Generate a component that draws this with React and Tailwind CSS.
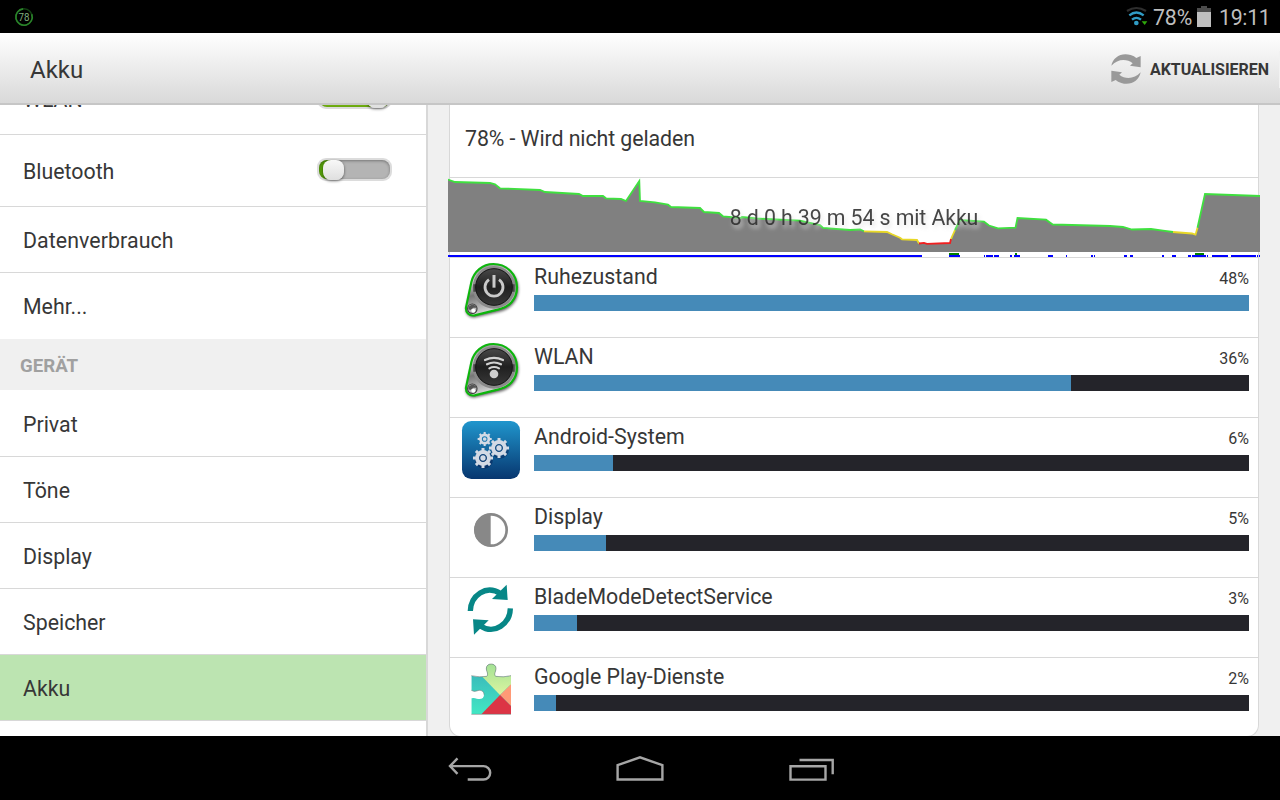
import React from 'react';

// ─────────────────────────────────────────────
//  Data
// ─────────────────────────────────────────────
const deviceItems = ['Privat', 'Töne', 'Display', 'Speicher', 'Akku'];

const consumers = [
  { name: 'Ruhezustand', pct: '48%', fill: 715, icon: 'power' },
  { name: 'WLAN', pct: '36%', fill: 537, icon: 'wifi' },
  { name: 'Android-System', pct: '6%', fill: 79, icon: 'gears' },
  { name: 'Display', pct: '5%', fill: 72, icon: 'contrast' },
  { name: 'BladeModeDetectService', pct: '3%', fill: 43, icon: 'sync' },
  { name: 'Google Play-Dienste', pct: '2%', fill: 22, icon: 'puzzle' },
];

// Battery level over time, split where the colour changes
const levels = [
  {
    color: '#3fe03f',
    points:
      '448,179.5 455,182 490,183 495,184.3 500,188.3 540,190 545,192 579,194 583,196 603,196 606,198.3 621,199 626,201 639.3,181 640,201 655,202.3 668,204.7 671,207 700,208 704,212 719,213 723,216.3 741,218 742,217 757,218.5 800,220.7 820,225 823,228 850,230 860,229.5 864,231.3',
  },
  { color: '#e8d827', points: '864,231.3 887,232 892,234.3 900,237.7 902,239.3 917,240 919,243.5' },
  { color: '#f01f1f', points: '919,243.5 924,242.8 927,243.8 950,243 951,239' },
  { color: '#e8d827', points: '951,239 955,230' },
  {
    color: '#3fe03f',
    points:
      '955,230 960,220 984,221.7 989,225.5 998,228.3 1015.5,227.7 1017.5,218 1046,219.7 1052.7,224.5 1110,226 1123,227 1132,229.5 1151,229 1163,230.7 1173,232',
  },
  { color: '#e8d827', points: '1173,232 1192,233.5 1195.5,234.7 1197.5,227.7' },
  { color: '#3fe03f', points: '1197.5,227.7 1205,194 1260,196' },
];

// [start, end] of every awake period
const awake = [
  [448, 922], [949, 960], [984, 985], [986, 993], [994, 999], [1010, 1012], [1014, 1020],
  [1048, 1053], [1066, 1067], [1091, 1093], [1094, 1095], [1124, 1127], [1130, 1133],
  [1162, 1164], [1172, 1176], [1188, 1191], [1192, 1206], [1207, 1208], [1212, 1228],
  [1231, 1256], [1257, 1258], [1259, 1260],
];
const charging = [[949, 959], [1015, 1017], [1195, 1204]];

// ─────────────────────────────────────────────
//  Icons
// ─────────────────────────────────────────────
const IconBox = ({ children }) => (
  <svg className="w-[84px] h-[79px] shrink-0" viewBox="0 9 252 237" fill="none">{children}</svg>
);

const TagIcon = ({ id, children }) => (
  <IconBox>
    <defs>
      <linearGradient id={`${id}-metal`} x1="0" y1="0" x2="0.3" y2="1">
        <stop offset="0" stopColor="#777" />
        <stop offset="0.35" stopColor="#d0d0d0" />
        <stop offset="0.6" stopColor="#777" />
        <stop offset="1" stopColor="#ddd" />
      </linearGradient>
      <linearGradient id={`${id}-face`} x1="0" y1="0" x2="0" y2="1">
        <stop offset="0" stopColor="#484848" />
        <stop offset="0.5" stopColor="#202020" />
        <stop offset="1" stopColor="#383838" />
      </linearGradient>
      <filter id={`${id}-shadow`} x="-20%" y="-20%" width="140%" height="140%">
        <feGaussianBlur stdDeviation="4" />
      </filter>
    </defs>
    <path
      d="M64 82C71 50 98 27 130 27C170 27 203 58 203 97C203 136 178 158 146 166L74 183C56 186 44 173 46 157Z"
      fill="#000" opacity="0.65" filter={`url(#${id}-shadow)`} transform="translate(2 4)"
    />
    <path
      d="M64 82C71 50 98 27 130 27C170 27 201 58 201 97C201 134 176 157 146 163L74 181C57 184 46 171 48 157Z"
      fill={`url(#${id}-metal)`} stroke="#0cb60c" strokeWidth="6.5"
    />
    <circle cx="132" cy="97" r="64" fill="#8a8a8a" />
    <path d="M70 99H194" stroke="#222" strokeWidth="22" opacity="0.65" />
    <circle cx="132" cy="96" r="55" fill={`url(#${id}-face)`} stroke="#151515" strokeWidth="3" />
    <circle cx="67" cy="161" r="14" fill="#bbb" stroke="#3c3c3c" strokeWidth="3.5" />
    <path d="M55 160C57 146 77 146 80 158L70 158L60 166Z" fill="#555" />
    <circle cx="70" cy="167" r="6" fill="#fff" />
    {children}
  </IconBox>
);

const Gear = ({ x, y, r }) => (
  <g transform={`translate(${x} ${y})`}>
    {[0, 45, 90, 135, 180, 225, 270, 315].map((a) => (
      <rect key={a} x={-r * 0.19} y={-r * 1.28} width={r * 0.38} height={r * 0.5} fill="#d3dae5" transform={`rotate(${a})`} />
    ))}
    <circle r={r * 0.76} stroke="#d3dae5" strokeWidth={r * 0.5} />
    <circle r={r * 0.34} fill="#d3dae5" />
  </g>
);

const icons = {
  power: (
    <TagIcon id="power">
      <path d="M117 74A27 27 0 1 0 147 74" stroke="#cacaca" strokeWidth="8.5" />
      <path d="M132 60V98" stroke="#cacaca" strokeWidth="9" />
    </TagIcon>
  ),
  wifi: (
    <TagIcon id="wifi">
      <path d="M105 75Q132 62 159 75M111 88Q132 77 153 88M118 100Q132 92 147 100" stroke="#d2d2d2" strokeWidth="6.5" strokeLinecap="round" />
      <circle cx="132" cy="117" r="13" fill="#cdcdcd" />
    </TagIcon>
  ),
  gears: (
    <IconBox>
      <defs>
        <linearGradient id="tile" x1="0" y1="0" x2="0" y2="1">
          <stop offset="0" stopColor="#2096cd" />
          <stop offset="1" stopColor="#07366f" />
        </linearGradient>
      </defs>
      <rect x="36" y="18" width="174" height="174" rx="28" fill="url(#tile)" />
      <g opacity="0.3" transform="translate(3 5)">
        <circle cx="147" cy="99" r="27" fill="#003" />
        <circle cx="99" cy="129" r="27" fill="#003" />
      </g>
      <Gear x={104} y={72} r={16.5} />
      <Gear x={147} y={99} r={23.5} />
      <Gear x={99} y={129} r={23.5} />
    </IconBox>
  ),
  contrast: (
    <IconBox>
      <circle cx="123" cy="105" r="47" stroke="#888" strokeWidth="8" />
      <path d="M122 56A49 49 0 0 0 122 154Z" fill="#888" />
    </IconBox>
  ),
  sync: (
    <IconBox>
      {[0, 180].map((a) => (
        <g key={a} transform={`rotate(${a} 121 104)`}>
          <path d="M61 108C62 62 108 27 152 56" stroke="#078787" strokeWidth="16" />
          <path d="M170 29L173 75L126 72Z" fill="#078787" />
        </g>
      ))}
    </IconBox>
  ),
  puzzle: (
    <IconBox>
      <defs>
        <linearGradient id="teal" x1="0" y1="0" x2="0" y2="1">
          <stop offset="0" stopColor="#38adb8" />
          <stop offset="1" stopColor="#42e9c4" />
        </linearGradient>
        <linearGradient id="lime" x1="0" y1="0" x2="0" y2="1">
          <stop offset="0" stopColor="#9fe094" />
          <stop offset="1" stopColor="#dcf5a0" />
        </linearGradient>
        <clipPath id="piece">
          <path d="M64 62Q90 68 110 64C117 58 108 47 109 39C110 23 137 23 138 39C139 47 130 58 137 64Q160 68 183 62V178H64V130Q72 127 80 131C94 135 102 129 102 119C102 108 92 103 80 108Q72 111 64 106Z" />
        </clipPath>
      </defs>
      <g clipPath="url(#piece)">
        <path d="M60 20H190V182H60Z" fill="url(#teal)" />
        <path d="M94 62L150 120L184 87V20H94Z" fill="url(#lime)" />
        <path d="M150 120L184 87V154Z" fill="#ff9a76" />
        <path d="M150 120L184 154V182H90Z" fill="#dc3545" />
      </g>
      <path
        d="M64 62Q90 68 110 64C117 58 108 47 109 39C110 23 137 23 138 39C139 47 130 58 137 64Q160 68 183 62M64 106Q72 111 80 108C92 103 102 108 102 119M64 178H183"
        stroke="#777" strokeWidth="2.5" opacity="0.7"
      />
    </IconBox>
  ),
};

const Toggle = ({ on }) => (
  <div className="flex w-[75px] h-[23px] rounded-[9px] bg-[#dcdcdc] p-[2px]">
    <div
      className={`flex items-center w-full h-[19px] rounded-[8px] pl-[4px] pr-[2px] shadow-[inset_0_1px_3px_rgba(0,0,0,0.35)] ${
        on ? 'justify-end bg-[#71b011]' : 'bg-[linear-gradient(90deg,#5aa50c_12px,#b4b4b4_12px)]'
      }`}
    >
      <div className="w-[21px] h-[20px] mt-px shrink-0 rounded-[8px] bg-linear-to-b from-[#f8f8f8] to-[#dfdfdf] shadow-[0_1px_3px_rgba(0,0,0,0.55)]" />
    </div>
  </div>
);

// ─────────────────────────────────────────────
//  Bars
// ─────────────────────────────────────────────
const StatusBar = () => (
  <div className="h-[33px] shrink-0 bg-black flex items-center justify-between pl-[14px] pr-[10px] text-[#bebebe]">
    <svg className="w-5 h-5" viewBox="0 0 20 20" fill="none">
      <circle cx="10" cy="10" r="8.2" stroke="#123f12" strokeWidth="1.6" />
      <path d="M10 1.8A8.2 8.2 0 1 0 18 8" stroke="#2a842a" strokeWidth="1.6" transform="rotate(-6 10 10)" />
      <text x="10" y="13.7" textAnchor="middle" fontSize="10.5" fill="#7fae7f" fontFamily="Roboto" textLength="11" lengthAdjust="spacingAndGlyphs">78</text>
    </svg>
    <div className="flex items-center leading-none">
      <svg className="w-[22px] h-5 mr-[5px]" viewBox="138 20 66 60" fill="none">
        <path d="M141 35Q169 17 198 35" stroke="#2e2e2e" strokeWidth="6.5" />
        <path d="M148 48Q169 31 191 48M156 61Q169 50 183 61" stroke="#309cc5" strokeWidth="7" />
        <circle cx="169" cy="71" r="7" fill="#309cc5" />
        <path d="M185 66H202L194 77Z" fill="#2fa80c" />
      </svg>
      <span className="w-[39px] mr-[5px] pt-[2px] text-[21.3px] tracking-[-0.1px] whitespace-nowrap">78%</span>
      <svg className="w-[14px] h-[21px] mr-[8px]" viewBox="0 0 14 21">
        <path d="M4 0H10V2H14V7H0V2H4Z" fill="#4c4c4c" />
        <path d="M0 6H14V21H0Z" fill="#bfbfbf" />
      </svg>
      <span className="w-[51px] pt-[2px] text-[21.3px] tracking-[-0.3px] whitespace-nowrap">19:11</span>
    </div>
  </div>
);

const ActionBar = () => (
  <div className="h-[72px] shrink-0 flex items-center justify-between pl-[30px] border-b-2 border-[#c6c6c6] bg-linear-to-b from-white to-[#d9d9d9]">
    <h1 className="text-[24px] leading-none pt-[3px]">Akku</h1>
    <div className="flex items-center pt-[2px]">
      <svg className="w-[30px] h-[30px] mr-[9px]" viewBox="93 162 90 90" fill="#999">
        {[0, 180].map((a) => (
          <path
            key={a}
            transform={`rotate(${a} 138 207)`}
            d="M94 197C99 171 125 156 152 165Q163 168 169 174L182 168V202L150 197L158 190C140 175 112 177 94 197Z"
          />
        ))}
      </svg>
      <span className="w-[120px] text-[16px] leading-none font-bold whitespace-nowrap pt-px tracking-[-0.03px]">AKTUALISIEREN</span>
      <div className="w-px h-[37px] ml-[9px] bg-[#f2f2f2]" />
    </div>
  </div>
);

const NavBar = () => (
  <div className="h-16 shrink-0 bg-black flex justify-center">
    <svg className="w-[170px] h-16" viewBox="0 0 170 64" fill="none" stroke="#a6a6a6" strokeWidth="2.4">
      <path d="M72.5 22.4L65 30.1L72.5 37.8M65 30.1H98.5A6.7 6.7 0 0 1 98.5 43.5H82.7" />
    </svg>
    <svg className="w-[170px] h-16" viewBox="0 0 170 64" fill="none" stroke="#a6a6a6" strokeWidth="2.4">
      <path d="M62.6 29.2L85 21.3L107.4 29.2V43.5H62.6Z" />
    </svg>
    <svg className="w-[170px] h-16" viewBox="0 0 170 64" fill="none" stroke="#a6a6a6" strokeWidth="2.4">
      <path d="M65.5 30.3H100.5V43.6H65.5ZM74.5 24H107.7V38.3" />
    </svg>
  </div>
);

const Sidebar = () => (
  <div className="w-[428px] shrink-0 overflow-hidden bg-white border-r-2 border-[#d8d8d8] text-[21.33px] leading-none">
    <div className="-mt-[42px]">
      {['WLAN', 'Bluetooth'].map((name) => (
        <div key={name} className="h-[72px] flex items-center justify-between pl-[23px] pr-[34px] border-b border-[#d8d8d8]">
          <span className="pt-[3px]">{name}</span>
          <div className="-mt-[3px]">
            <Toggle on={name === 'WLAN'} />
          </div>
        </div>
      ))}
      <div className="h-[66px] flex items-center pl-[23px] pt-[3px] border-b border-[#d8d8d8] tracking-[0.08px]">Datenverbrauch</div>
      <div className="h-[66px] flex items-center pl-[23px] pt-[2px]">Mehr...</div>
      <div className="h-[51px] flex items-center pl-5 pt-[3px] bg-[#f0f0f0] text-[18.67px] font-bold text-[#a0a0a0]">GERÄT</div>
      <div className="pt-px">
        {deviceItems.map((name) => (
          <div
            key={name}
            className={`h-[66px] flex items-center pl-[23px] pt-[3px] border-b border-[#d8d8d8] ${name === 'Akku' ? 'bg-[#bce4b1]' : ''}`}
          >
            {name}
          </div>
        ))}
      </div>
    </div>
  </div>
);

// ─────────────────────────────────────────────
//  Battery history
// ─────────────────────────────────────────────
const outline = levels.map((l) => l.points).join(' ');

const History = () => (
  <div className="relative h-20 -mx-[2px] flex justify-center">
    <svg className="absolute inset-0 w-[812px] h-20" viewBox="448 178 812 80" fill="none">
      <path d="M450 257.5H1258" stroke="#d8d8d8" />
      <polygon points={`448,252 ${outline} 1260,252`} fill="#808080" />
      {levels.map((l, i) => (
        <polyline key={i} points={l.points} stroke={l.color} strokeWidth="1.8" />
      ))}
      {charging.map(([a, b]) => (
        <rect key={a} x={a} y="253" width={b - a} height="2" fill="#008000" />
      ))}
      {awake.map(([a, b]) => (
        <rect key={a} x={a} y="255" width={b - a} height="2" fill="#00f" />
      ))}
    </svg>
    <span className="relative pt-[29px] text-[21.33px] tracking-[-0.1px] leading-none whitespace-nowrap text-[#333] opacity-90 [text-shadow:2px_3px_4px_rgba(225,225,225,0.9)]">
      8 d 0 h 39 m 54 s mit Akku
    </span>
  </div>
);

const ConsumerRow = ({ item }) => (
  <div className="h-20 flex items-start pr-[9px] border-b border-[#d8d8d8] last:border-b-0">
    {icons[item.icon]}
    <div className="flex-1">
      <div className="h-[37px] flex items-center justify-between leading-none">
        <span className="text-[21.33px] pt-px">{item.name}</span>
        <span className="text-[16px] pt-[5px]">{item.pct}</span>
      </div>
      <div className="h-4 bg-[#24242a]">
        <div className="h-full bg-[#458ab8]" style={{ width: item.fill }} />
      </div>
    </div>
  </div>
);

export default function App() {
  return (
    <div className="w-[1280px] h-[800px] flex flex-col overflow-hidden font-[Roboto,sans-serif] text-[#373737]">
      <StatusBar />
      <ActionBar />
      <div className="flex-1 min-h-0 flex">
        <Sidebar />
        <div className="flex-1 overflow-hidden bg-[#f0f0f0] px-[21px]">
          <div className="h-[632px] bg-white border-x border-b border-[#d8d8d8] rounded-b-[12px]">
            <div className="h-[73px] flex items-center pl-[15px] border-b border-[#d8d8d8] text-[21.33px] tracking-[-0.08px] leading-none -mb-px pb-[5px]">
              78% - Wird nicht geladen
            </div>
            <div className="pt-px">
              <History />
              {consumers.map((c) => (
                <ConsumerRow key={c.name} item={c} />
              ))}
            </div>
          </div>
        </div>
      </div>
      <NavBar />
    </div>
  );
}
